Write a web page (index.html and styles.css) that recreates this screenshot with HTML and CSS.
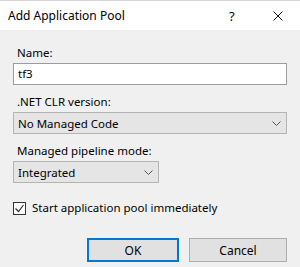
FILE: index.html
```html
<!DOCTYPE html>
<html lang="en">
<head>
    <meta charset="UTF-8">
    <title>Add Application Pool</title>
    <link rel="stylesheet" href="styles.css">
</head>
<body>
<div class="dialog">
  <div class="titlebar">
    <span class="title">Add Application Pool</span>
    <span class="help">?</span>
    <svg class="close" width="10" height="10" viewBox="0 0 10 10">
      <path d="M0.5 0.5 L9.5 9.5 M9.5 0.5 L0.5 9.5" stroke="#111" stroke-width="1" fill="none"/>
    </svg>
  </div>
  <div class="content">
    <div class="label first">Name:</div>
    <div class="textbox">tf3</div>

    <div class="label">.NET CLR version:</div>
    <div class="combo wide">
      <span>No Managed Code</span>
      <svg class="chev" width="9" height="5" viewBox="0 0 9 5"><path d="M0.5 0.5 L4.5 4.5 L8.5 0.5" stroke="#555" fill="none"/></svg>
    </div>

    <div class="label">Managed pipeline mode:</div>
    <div class="combo narrow">
      <span>Integrated</span>
      <svg class="chev" width="9" height="5" viewBox="0 0 9 5"><path d="M0.5 0.5 L4.5 4.5 L8.5 0.5" stroke="#555" fill="none"/></svg>
    </div>

    <div class="check">
      <span class="box">
        <svg width="11" height="11" viewBox="0 0 11 11"><path d="M1.5 5.5 L4.5 8.5 L9.5 2" stroke="#333" stroke-width="1.2" fill="none"/></svg>
      </span>
      <span>Start application pool immediately</span>
    </div>

    <div class="buttons">
      <button class="btn ok">OK</button>
      <button class="btn cancel">Cancel</button>
    </div>
  </div>
</div>
</body>
</html>
```
FILE: styles.css
```css
html, body {
  margin: 0;
  padding: 0;
}

body {
  width: 300px;
  height: 267px;
  overflow: hidden;
  font-family: "Noto Sans", "Open Sans", sans-serif;
  font-size: 11.5px;
  color: #000;
  background: #f0f0f0;
}

.dialog {
  display: flex;
  flex-direction: column;
  height: 267px;
}

/* title bar */
.titlebar {
  height: 30px;
  box-sizing: border-box;
  border-top: 1px solid #d6d6d6;
  background: #fff;
  display: flex;
  align-items: center;
  padding-left: 8px;
}

.title {
  flex: 1;
  font-size: 12px;
}

.help {
  width: 10px;
  margin-right: 34px;
  font-size: 13px;
}

.close {
  margin-right: 17px;
}

/* form body */
.content {
  display: flex;
  flex-direction: column;
  padding: 0 13px;
}

.label {
  line-height: 16px;
  margin-top: 9px;
  margin-bottom: 2px;
  padding-left: 4px;
}

.label.first {
  margin-top: 15px;
}

.textbox {
  height: 22px;
  box-sizing: border-box;
  border: 1px solid #9c9c9c;
  background: #fff;
  padding: 0 4px;
  line-height: 20px;
}

.combo {
  height: 22px;
  box-sizing: border-box;
  border: 1px solid #b4b4b4;
  background: #e5e5e5;
  display: flex;
  align-items: center;
  justify-content: space-between;
  padding: 0 5px 0 4px;
}

.combo.narrow {
  width: 146px;
}

.chev {
  display: block;
}

.check {
  display: flex;
  align-items: center;
  margin-top: 17px;
  line-height: 16px;
}

.box {
  width: 13px;
  height: 13px;
  box-sizing: border-box;
  border: 1px solid #333;
  background: #fff;
  display: flex;
  align-items: center;
  justify-content: center;
  margin-right: 6px;
}

.buttons {
  display: flex;
  justify-content: flex-end;
  gap: 10px;
  margin-top: 22px;
}

.btn {
  height: 24px;
  box-sizing: border-box;
  font-family: inherit;
  font-size: 12px;
  background: #e1e1e1;
  border: 1px solid #adadad;
  color: #000;
  padding: 0;
}

.btn.ok {
  width: 92px;
  border: 2px solid #0078d7;
}

.btn.cancel {
  width: 98px;
}
```
